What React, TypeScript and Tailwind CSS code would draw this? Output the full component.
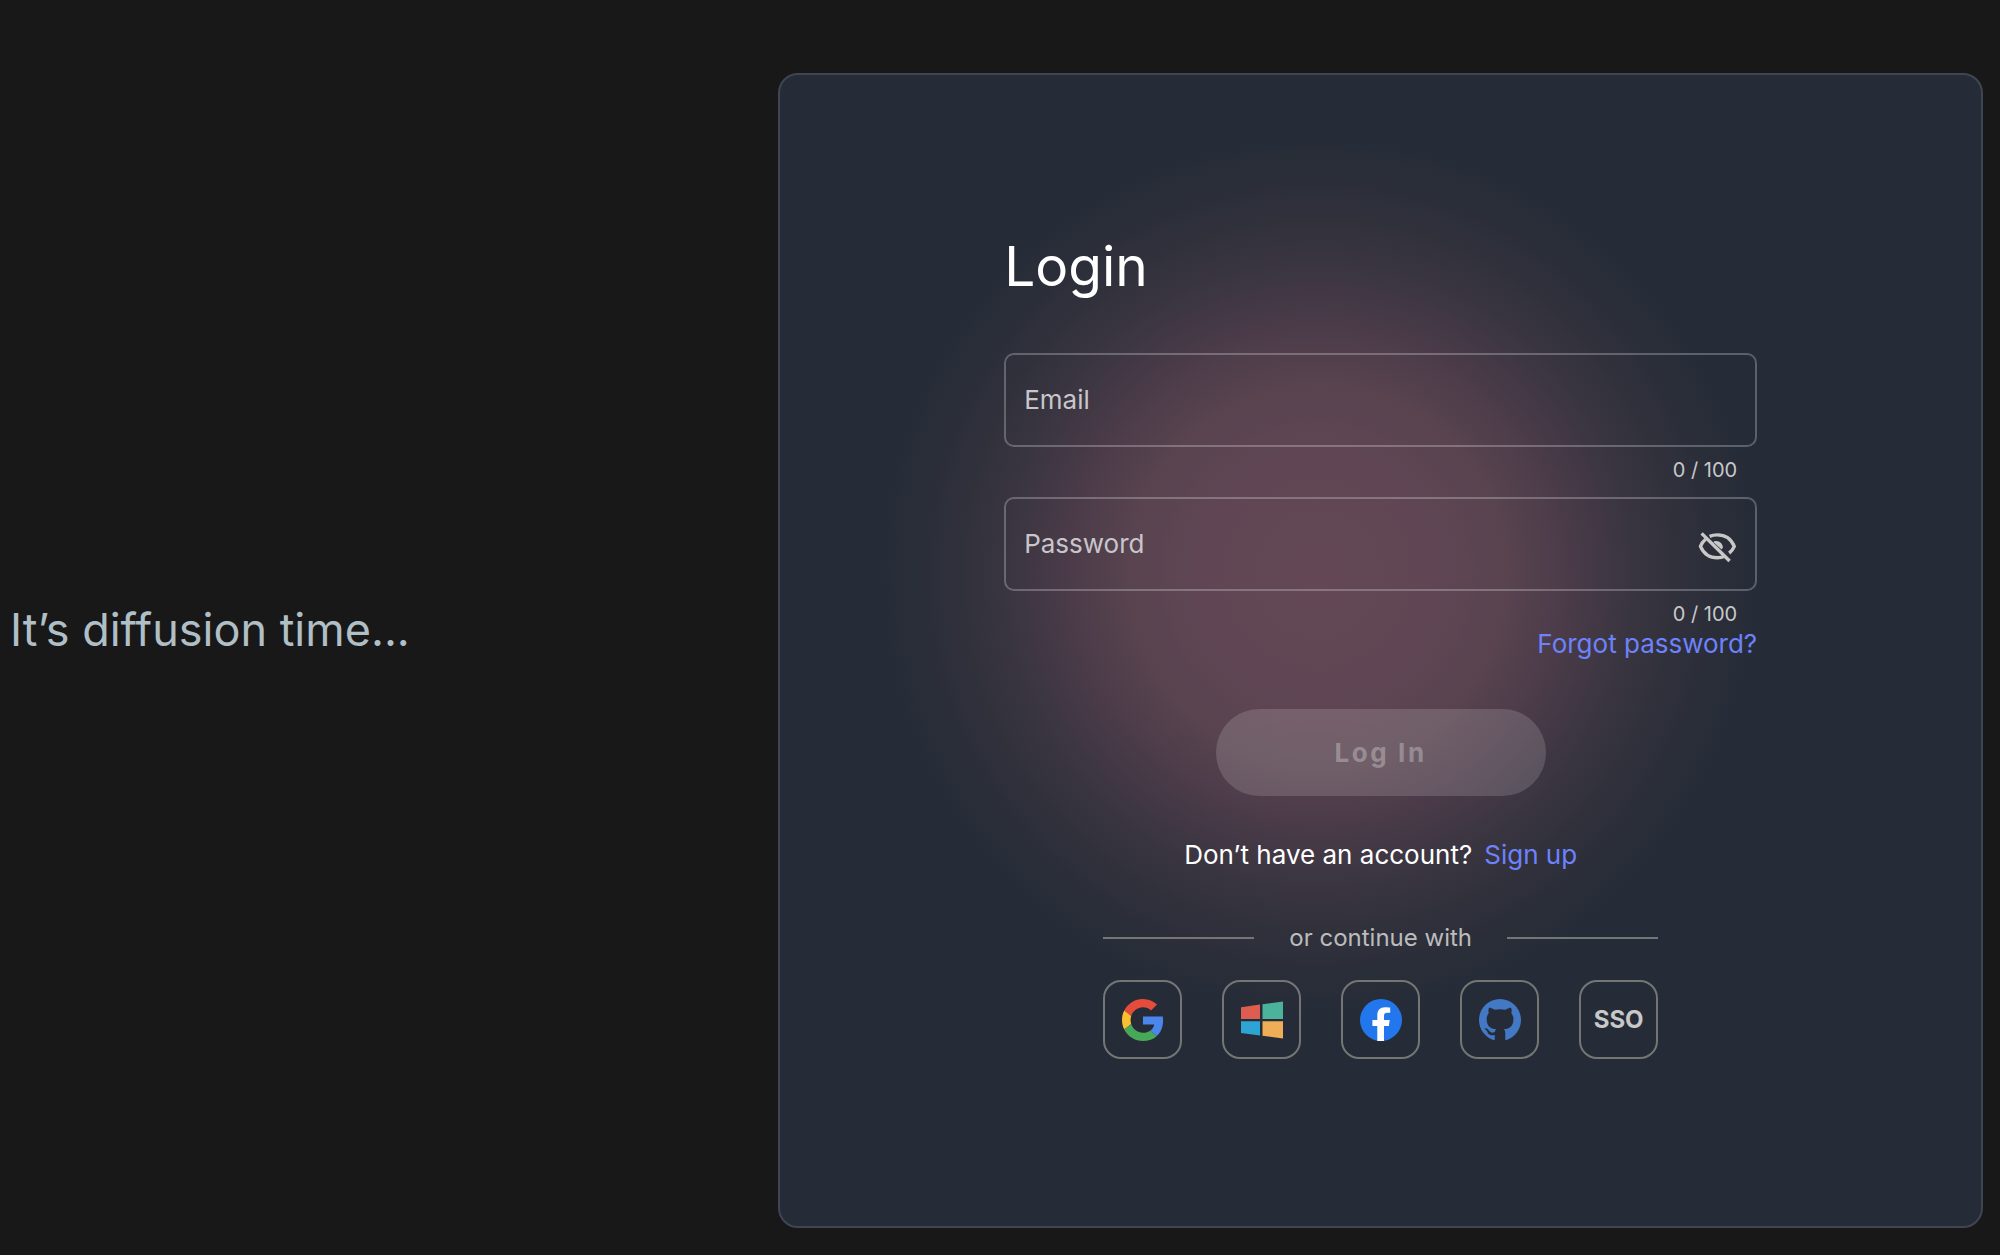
import { useState } from "react";
import type { ReactNode } from "react";

const MAX_LENGTH = 100;

type FieldProps = {
  id: string;
  label: string;
  type: string;
  value: string;
  onChange: (value: string) => void;
  children?: ReactNode;
};

function Field({ id, label, type, value, onChange, children }: FieldProps) {
  return (
    <div>
      <div className="relative flex h-[94px] items-center rounded-[10px] border-2 border-white/25 pr-[18px] focus-within:border-white/60">
        <input
          id={id}
          type={type}
          value={value}
          maxLength={MAX_LENGTH}
          placeholder=" "
          onChange={(event) => onChange(event.target.value)}
          className="peer h-full min-w-0 flex-1 bg-transparent px-[18px] text-[26px] text-white outline-none"
        />
        <label
          htmlFor={id}
          className="pointer-events-none absolute left-[18px] hidden text-[26px] leading-8 text-[#c8c6cb] peer-placeholder-shown:block"
        >
          {label}
        </label>
        {children}
      </div>
      <p className="pt-[9px] pr-5 text-right text-[20px] leading-7 text-[#c8c8c8]">
        {value.length} / {MAX_LENGTH}
      </p>
    </div>
  );
}

function EyeIcon({ off }: { off: boolean }) {
  return (
    <svg
      viewBox="0 0 42 42"
      fill="none"
      stroke="currentColor"
      strokeWidth="3.4"
      className="h-[42px] w-[42px]"
      aria-hidden="true"
    >
      {off ? (
        <>
          <path d="M14.6 13.4C16.8 12.4 19.4 11.9 22.3 11.9c7.8 0 14 4.4 17 11.4-1.2 2.8-2.9 5-5.1 6.8" />
          <path d="M10.6 16.2C8.4 18 6.5 20.4 5.5 23.3c3 7 9 11.4 16.8 11.4 2.7 0 5.2-.5 7.4-1.5" />
          <path d="M6.6 10.4 34.6 38" />
          <path d="M19.8 18.1c4.3-.9 8.1 2.5 8.1 6.9l-1.6 1.2-8-7.3z" fill="currentColor" stroke="none" />
        </>
      ) : (
        <>
          <path d="M5.5 23.3c3-7 9-11.4 16.8-11.4s14 4.4 17 11.4c-3 7-9.2 11.4-17 11.4s-13.8-4.4-16.8-11.4z" />
          <circle cx="22.3" cy="23.3" r="5" />
        </>
      )}
    </svg>
  );
}

function GoogleIcon() {
  return (
    <svg viewBox="0 0 48 48" className="h-[42px] w-[42px]" aria-hidden="true">
      <path fill="#e64c3c" d="M24 9.5c3.54 0 6.71 1.22 9.21 3.6l6.85-6.85C35.9 2.38 30.47 0 24 0 14.62 0 6.51 5.38 2.56 13.22l7.98 6.19C12.43 13.72 17.74 9.5 24 9.5z" />
      <path fill="#4a86ec" d="M46.98 24.55c0-1.57-.15-3.09-.38-4.55H24v9.02h12.94c-.58 2.96-2.26 5.48-4.78 7.18l7.73 6c4.51-4.18 7.09-10.36 7.09-17.65z" />
      <path fill="#fbc02f" d="M10.53 28.59c-.48-1.45-.76-2.99-.76-4.59s.27-3.14.76-4.59l-7.98-6.19C.92 16.46 0 20.12 0 24c0 3.88.92 7.54 2.56 10.78l7.97-6.19z" />
      <path fill="#47a857" d="M24 48c6.48 0 11.93-2.13 15.89-5.81l-7.73-6c-2.15 1.45-4.92 2.3-8.16 2.3-6.26 0-11.57-4.22-13.47-9.91l-7.98 6.19C6.51 42.62 14.62 48 24 48z" />
    </svg>
  );
}

function WindowsIcon() {
  return (
    <svg viewBox="0 0 42 42" className="h-[42px] w-[42px]" aria-hidden="true">
      <path fill="#dd5e50" d="M0 8.2 19 5.6V20H0z" />
      <path fill="#4bb39b" d="M21.5 5.2 42 2.4V20H21.5z" />
      <path fill="#2ea4d4" d="M0 22.2h19v14.4L0 34z" />
      <path fill="#f0ad57" d="M21.5 22.2H42v17.4l-20.5-2.8z" />
    </svg>
  );
}

function FacebookIcon() {
  return (
    <svg viewBox="0 0 42 42" className="h-[42px] w-[42px]" aria-hidden="true">
      <circle cx="21" cy="21" r="21" fill="#2377ec" />
      <path
        fill="#fff"
        d="M17.3 42V27.1h-4.9v-6.2h4.9v-4.6C17.3 11 20.2 8.2 25 8.2c2.2 0 5.2.3 5.2.3v5.2h-2.9c-2.7 0-3.3 1.5-3.3 3.2v4h5.7l-.8 6.2H24V42z"
      />
    </svg>
  );
}

function GithubIcon() {
  return (
    <svg viewBox="0 0 16 16" className="h-[42px] w-[42px]" aria-hidden="true">
      <path
        fill="#4378c4"
        d="M8 0C3.58 0 0 3.58 0 8c0 3.54 2.29 6.53 5.47 7.59.4.07.55-.17.55-.38 0-.19-.01-.82-.01-1.49-2.01.37-2.53-.49-2.69-.94-.09-.23-.48-.94-.82-1.13-.28-.15-.68-.52-.01-.53.63-.01 1.08.58 1.23.82.72 1.21 1.87.87 2.33.66.07-.52.28-.87.51-1.07-1.78-.2-3.64-.89-3.64-3.95 0-.87.31-1.59.82-2.15-.08-.2-.36-1.02.08-2.12 0 0 .67-.21 2.2.82.64-.18 1.32-.27 2-.27s1.36.09 2 .27c1.53-1.04 2.2-.82 2.2-.82.44 1.1.16 1.92.08 2.12.51.56.82 1.27.82 2.15 0 3.07-1.87 3.75-3.65 3.95.29.25.54.73.54 1.48 0 1.07-.01 1.93-.01 2.2 0 .21.15.46.55.38A8.01 8.01 0 0 0 16 8c0-4.42-3.58-8-8-8z"
      />
    </svg>
  );
}

const providers: { name: string; icon: ReactNode }[] = [
  { name: "Google", icon: <GoogleIcon /> },
  { name: "Microsoft", icon: <WindowsIcon /> },
  { name: "Facebook", icon: <FacebookIcon /> },
  { name: "GitHub", icon: <GithubIcon /> },
  { name: "SSO", icon: "SSO" },
];

export default function App() {
  const [email, setEmail] = useState("");
  const [password, setPassword] = useState("");
  const [showPassword, setShowPassword] = useState(false);

  return (
    <div className="flex min-h-screen bg-[#181818] pr-[17px] font-['Inter',sans-serif]">
      <aside className="flex w-[39.25%] shrink-0 items-center pl-[10px]">
        <p className="pt-1 text-[45px] leading-[52px] text-[#b0bec5]">It’s diffusion time...</p>
      </aside>

      <main className="mt-[73px] mb-[27px] flex flex-1 flex-col items-center justify-center rounded-[20px] border-2 border-[#3f4552] bg-[#252c37] bg-[radial-gradient(circle_at_44.8%_43.4%,#634755_0px,#604654_120px,#58434f_190px,#4b3b49_250px,#3b3641_305px,#31313c_355px,#2a2e39_400px,#252c37_450px)] pb-2">
        <form className="flex w-full max-w-[753px] flex-col" onSubmit={(event) => event.preventDefault()}>
          <h1 className="mb-[55px] text-[55px] leading-[64px] text-white">Login</h1>

          <div className="flex flex-col gap-[13px]">
            <Field id="email" label="Email" type="email" value={email} onChange={setEmail} />
            <Field
              id="password"
              label="Password"
              type={showPassword ? "text" : "password"}
              value={password}
              onChange={setPassword}
            >
              <button
                type="button"
                aria-label={showPassword ? "Hide password" : "Show password"}
                onClick={() => setShowPassword(!showPassword)}
                className="text-[#c8c8c8]"
              >
                <EyeIcon off={!showPassword} />
              </button>
            </Field>
          </div>
          <a href="#forgot" className="self-end text-[26px] leading-8 text-[#6d82fb]">
            Forgot password?
          </a>

          <button
            type="submit"
            disabled={!email || !password}
            className="mt-[49px] h-[87px] w-[330px] self-center rounded-full bg-white/15 text-[26px] font-bold tracking-widest text-white disabled:text-white/30"
          >
            Log In
          </button>

          <p className="mt-[43px] flex justify-center gap-3 text-[26px] leading-8 text-white">
            Don’t have an account?
            <a href="#signup" className="text-[#6d82fb]">
              Sign up
            </a>
          </p>

          <div className="mt-[51px] flex w-[555px] items-center self-center text-[24px] leading-8 text-[#bcbcbc]">
            <span className="h-[2px] w-[151px] bg-[#757575]" />
            <span className="flex-1 text-center">or continue with</span>
            <span className="h-[2px] w-[151px] bg-[#757575]" />
          </div>

          <div className="mt-[26px] flex gap-10 self-center">
            {providers.map((provider) => (
              <button
                key={provider.name}
                type="button"
                aria-label={provider.name}
                className="flex h-[79px] w-[79px] items-center justify-center rounded-[18px] border-2 border-[#757575] text-[24px] font-bold text-[#c8c8c8]"
              >
                {provider.icon}
              </button>
            ))}
          </div>
        </form>
      </main>
    </div>
  );
}
